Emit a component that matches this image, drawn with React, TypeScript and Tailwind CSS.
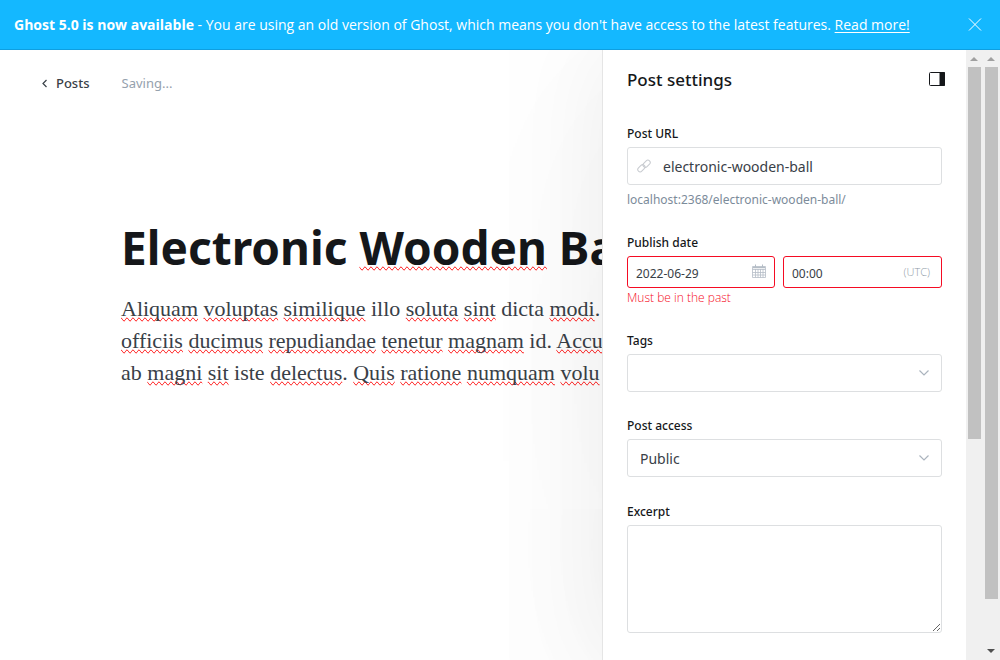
import React from 'react';

const Flagged = ({ children }: { children: string }) => (
  <span className="[text-decoration-line:spelling-error]">{children}</span>
);

// A leading asterisk marks a word that the spell checker flags.
const lines = [
  '*Aliquam *voluptas *similique illo *soluta *sint dicta *modi.',
  '*officiis *ducimus *repudiandae *tenetur *magnam id. *Accu',
  'ab *magni *sit iste *delectus. *Quis *ratione *numquam *volu',
];

function Prose({ text }: { text: string }) {
  return (
    <>
      {text.split(' ').map((word, i) => {
        const bare = word.replace('*', '');
        const stop = bare.endsWith('.') ? '.' : '';
        const core = stop ? bare.slice(0, -1) : bare;
        return (
          <React.Fragment key={i}>
            {i > 0 && ' '}
            {word.startsWith('*') ? <Flagged>{core}</Flagged> : core}
            {stop}
          </React.Fragment>
        );
      })}
    </>
  );
}

function Chevron() {
  return (
    <svg className="pointer-events-none absolute top-3 right-3 h-3 w-3" viewBox="0 0 12 12" fill="none" stroke="#abb4be" strokeWidth="1.2" aria-hidden="true">
      <path d="M1.500 4.500L6 9l4.500-4.500" />
    </svg>
  );
}

function CalendarIcon() {
  return (
    <svg className="absolute top-2 right-2 h-4 w-4" viewBox="0 0 16 16" fill="none" stroke="#b5bdc6" aria-hidden="true">
      <path d="M1.500 2.500h13v11h-13zM1.500 5.500h13M1.500 8.500h13M1.500 11h13M4.500 5v8.500M7 5v8.500M9.500 5v8.500M12 5v8.500" strokeWidth=".8" />
      <path d="M2 3.500h12" strokeWidth="1.500" />
      <path d="M4.500.5v3M11.500.5v3" />
    </svg>
  );
}

function LinkIcon() {
  return (
    <svg className="absolute top-3 left-2.5 h-3.5 w-3.5" viewBox="0 0 24 24" fill="none" stroke="#c8cbd0" strokeWidth="1.800" strokeLinejoin="round" aria-hidden="true">
      <rect x="9.500" y="4" width="14" height="8" rx="4" transform="rotate(-45 16.500 8)" />
      <rect x=".5" y="12" width="14" height="8" rx="4" transform="rotate(-45 7.500 16)" />
    </svg>
  );
}

function ScrollTrack({ thumb, end }: { thumb: string; end?: boolean }) {
  return (
    <div className="relative z-10 flex h-full w-[17px] shrink-0 flex-col items-center bg-[#f0f0f0]" aria-hidden="true">
      <svg className="h-[17px] w-full shrink-0" viewBox="0 0 17 17" fill="#a0a0a0">
        <path d="M4 11h8L8 7z" />
      </svg>
      <div className={`w-[13px] bg-[#c1c1c1] ${thumb}`} />
      {end && (
        <svg className="mt-auto h-[17px] w-full shrink-0" viewBox="0 0 17 17" fill="#505050">
          <path d="M4 6h8l-4 4z" />
        </svg>
      )}
    </div>
  );
}

const label = 'block text-[12px] leading-[18px] font-medium text-[#15171a]';
const box = 'block w-full rounded-[3px] border bg-white text-[#394047] outline-none';
const plain = 'border-[#dddfe1]';
const invalid = 'border-[#f50b23] pt-0.5 pl-2 text-[12px]';

export default function App() {
  return (
    <div className="flex h-screen flex-col overflow-hidden bg-white font-['Noto_Sans',sans-serif] text-[#15171a]">
      <header className="relative z-10 flex h-[50px] shrink-0 items-center justify-between border-b border-[#0f9fe0] bg-[#14b8ff] pr-[18px] pl-[14px] text-white">
        <p className="font-['Open_Sans',sans-serif] text-[14px] whitespace-nowrap">
          <strong>Ghost 5.0 is now available</strong> - You are using an old version of Ghost, which means you don't have
          access to the latest features.{' '}
          <a href="#release" className="underline underline-offset-2">Read more!</a>
        </p>
        <button type="button" aria-label="Close">
          <svg className="h-3.5 w-3.5" viewBox="0 0 14 14" stroke="#fff" aria-hidden="true">
            <path d="M1 .5l12 12M13 .5L1 12.500" />
          </svg>
        </button>
      </header>

      <div className="flex min-h-0 flex-1">
        <main className="min-w-0 flex-1 overflow-hidden">
          <nav className="flex h-[67px] items-center gap-8 pl-10 text-[13px]">
            <a href="#posts" className="flex items-center gap-1.5 font-medium text-[#394047]">
              <svg className="h-2.5 w-2.5" viewBox="0 0 10 10" fill="none" stroke="#394047" strokeWidth="1.200" aria-hidden="true">
                <path d="M6.500 1L3 4.500 6.500 8" />
              </svg>
              Posts
            </a>
            <span className="text-[#95a1ad]">Saving...</span>
          </nav>
          <article className="pt-[100px] pl-[121px] whitespace-nowrap">
            <h1 className="text-[46px] leading-[60px] font-bold">
              Electronic <Flagged>Wooden</Flagged> Ba
            </h1>
            <div className="mt-4 font-['Liberation_Serif',serif] text-[22px] leading-8 text-[#394047]">
              {lines.map((line) => (
                <p key={line}><Prose text={line} /></p>
              ))}
            </div>
          </article>
        </main>

        <aside className="relative flex w-[381px] shrink-0 border-l border-[#e5e5e5] bg-white shadow-[0_50px_300px_rgba(0,0,0,0.05),0_0_90px_rgba(0,0,0,0.06)]">
          <form className="min-w-0 flex-1 overflow-hidden pr-6 pl-6" onSubmit={(e) => e.preventDefault()}>
            <div className="-mr-[3px] flex h-[59px] items-center justify-between">
              <h2 className="text-[17px] font-medium">Post settings</h2>
              <button type="button" aria-label="Toggle sidebar">
                <svg className="h-4 w-4" viewBox="0 0 16 16" fill="none" stroke="#15171a" aria-hidden="true">
                  <rect x=".5" y=".5" width="15" height="13" rx="1" />
                  <path d="M11 .5h4.500v13H11z" fill="#15171a" />
                </svg>
              </button>
            </div>

            <div className="mt-4">
              <label htmlFor="url" className={label}>Post URL</label>
              <div className="relative mt-1">
                <LinkIcon />
                <input id="url" defaultValue="electronic-wooden-ball" className={`${box} ${plain} h-[38px] pl-[35px] text-[14px]`} />
              </div>
              <p className="mt-1.5 text-[12px] leading-[18px] text-[#7c8b9a]">localhost:2368/electronic-wooden-ball/</p>
            </div>

            <fieldset className="mt-[25px]">
              <legend className={label}>Publish date</legend>
              <div className="mt-1 flex gap-2">
                <div className="relative w-[148px]">
                  <input aria-label="Date" defaultValue="2022-06-29" className={`${box} ${invalid} h-8`} />
                  <CalendarIcon />
                </div>
                <div className="relative min-w-0 flex-1">
                  <input aria-label="Time" defaultValue="00:00" className={`${box} ${invalid} h-8`} />
                  <span className="absolute top-2 right-3 font-['Open_Sans',sans-serif] text-[11px] leading-4 font-light text-[#8f9ba8]">(UTC)</span>
                </div>
              </div>
              <p className="font-['Open_Sans',sans-serif] text-[12px] leading-5 font-light text-[#f50b23]">Must be in the past</p>
            </fieldset>

            <div className="mt-6">
              <label htmlFor="tags" className={label}>Tags</label>
              <div className="relative mt-1">
                <input id="tags" className={`${box} ${plain} h-[38px] px-3 text-[14px]`} />
                <Chevron />
              </div>
            </div>

            <div className="mt-[25px]">
              <label htmlFor="access" className={label}>Post access</label>
              <div className="relative mt-1">
                <select id="access" className={`${box} ${plain} h-[38px] appearance-none px-3 text-[14px]`}>
                  <option>Public</option>
                </select>
                <Chevron />
              </div>
            </div>

            <div className="mt-[26px]">
              <label htmlFor="excerpt" className={label}>Excerpt</label>
              <textarea id="excerpt" className={`${box} ${plain} mt-1 h-[108px] resize-y`} />
            </div>
          </form>
          <ScrollTrack thumb="h-[372px]" />
        </aside>
        <ScrollTrack thumb="h-[532px]" end />
      </div>
    </div>
  );
}
